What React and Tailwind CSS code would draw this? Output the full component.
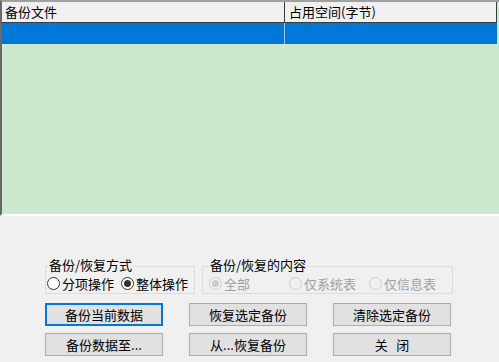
const FONT = { fontFamily: '"Noto Sans CJK SC", "Noto Sans", sans-serif' };

function Radio({ label, checked, disabled }) {
  return (
    <label className={`flex items-center gap-[2px] ${disabled ? 'text-[#a0a0a0]' : 'text-black'}`}>
      <span
        className={`w-[13px] h-[13px] rounded-full border flex items-center justify-center ${
          disabled ? 'border-[#cccccc] bg-[#f0f0f0]' : 'border-[#333333] bg-white'
        }`}
      >
        {checked && <span className={`w-[7px] h-[7px] rounded-full ${disabled ? 'bg-[#cccccc]' : 'bg-[#333333]'}`} />}
      </span>
      <span>{label}</span>
    </label>
  );
}

function Btn({ children, focused }) {
  return (
    <button
      type="button"
      className={`w-[118px] h-[23px] bg-[#e1e1e1] text-[13px] leading-none text-black flex items-center justify-center ${
        focused ? 'border-2 border-[#0078d7]' : 'border border-[#adadad]'
      }`}
    >
      {children}
    </button>
  );
}

export default function App() {
  return (
    <div className="w-[499px] h-[362px] bg-[#f0f0f0] flex flex-col text-[13px]" style={FONT}>
      <div className="h-[216px] flex flex-col border-t-2 border-l-2 border-t-[#a0a0a0] border-l-[#696969] border-b-2 border-b-white bg-[#cde8cd]">
        <div className="flex h-[21px] w-[495px] bg-[#f0f0f0] border-b border-r border-[#3c3c3c]">
          <div className="w-[283px] border-r border-[#3c3c3c] pl-[3px] text-[13px] leading-[20px]">备份文件</div>
          <div className="flex-1 pl-[4px] text-[13px] leading-[20px]">占用空间(字节)</div>
        </div>
        <div className="flex h-[21px] w-[495px] bg-[#0078d7]">
          <div className="w-[283px] border-r border-[#9cc8ec]" />
          <div className="flex-1" />
        </div>
        <div className="flex-1" />
      </div>

      <div className="flex flex-col pl-[45px] pt-[50px]">
        <div className="flex gap-[7px]">
          <fieldset className="w-[150px] h-[28px] border border-[#dcdcdc] relative">
            <span className="absolute left-[2px] -top-[9px] bg-[#f0f0f0] px-[1px] leading-[14px]">备份/恢复方式</span>
            <div className="flex items-center gap-[7px] pt-[9px] pl-[1px] leading-[15px]">
              <Radio label="分项操作" />
              <Radio label="整体操作" checked />
            </div>
          </fieldset>
          <fieldset className="w-[251px] h-[28px] border border-[#dcdcdc] relative">
            <span className="absolute left-[6px] -top-[9px] bg-[#f0f0f0] px-[1px] leading-[14px]">备份/恢复的内容</span>
            <div className="flex items-center pt-[9px] pl-[6px] leading-[15px]">
              <div className="w-[80px]"><Radio label="全部" checked disabled /></div>
              <div className="w-[80px]"><Radio label="仅系统表" disabled /></div>
              <Radio label="仅信息表" disabled />
            </div>
          </fieldset>
        </div>
        <div className="flex gap-[26px] mt-[9px]">
          <Btn focused>备份当前数据</Btn>
          <Btn>恢复选定备份</Btn>
          <Btn>清除选定备份</Btn>
        </div>
        <div className="flex gap-[26px] mt-[7px]">
          <Btn>备份数据至...</Btn>
          <Btn>从...恢复备份</Btn>
          <Btn>关&nbsp;&nbsp;&nbsp;闭</Btn>
        </div>
      </div>
    </div>
  );
}
